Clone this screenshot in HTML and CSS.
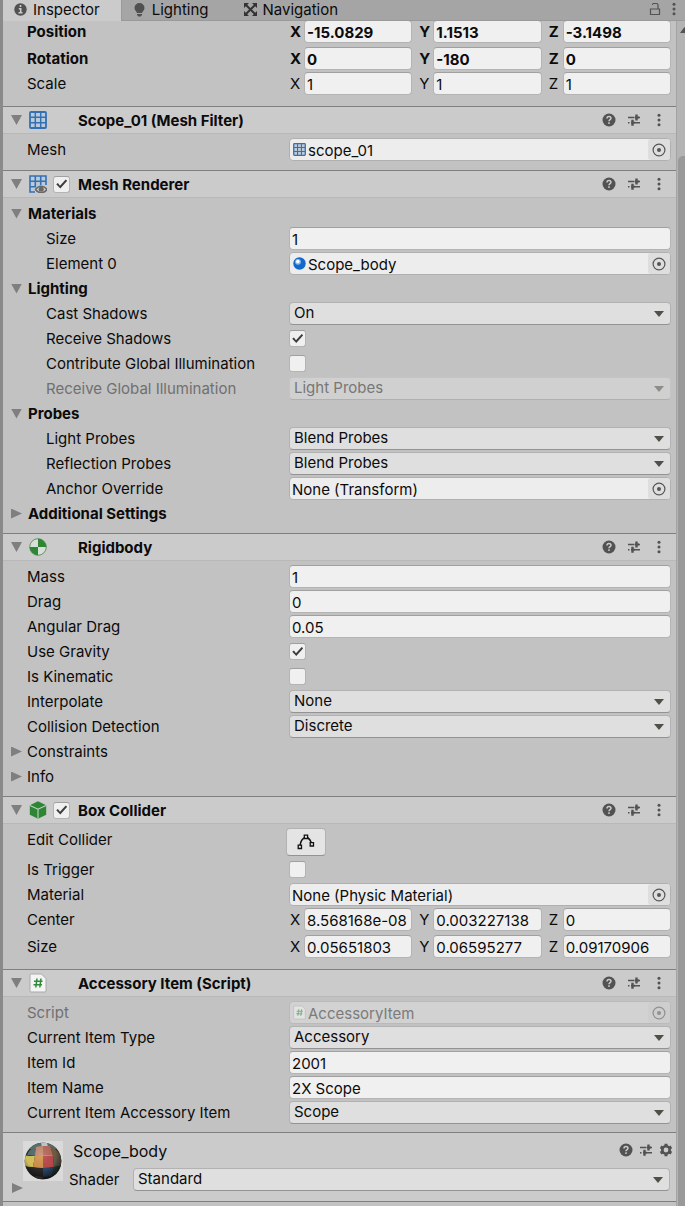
FILE: index.html
```html
<!DOCTYPE html>
<html lang="en">
<head>
    <meta charset="UTF-8">
    <meta name="viewport" content="width=device-width, initial-scale=1.0">
    <title>Inspector</title>
    <link rel="stylesheet" href="styles.css">
</head>
<body>
    <!-- Shared icons -->
    <svg class="sprite" width="0" height="0" aria-hidden="true">
        <symbol id="i-help" viewBox="0 0 14 14">
            <circle cx="7" cy="7" r="6.5" fill="#525252"/>
            <path d="M5 5.6C5 4.2 5.8 3.5 7 3.5s2 .7 2 1.8C9 6.6 7 6.6 7 8.3" fill="none" stroke="#cbcbcb" stroke-width="1.5"/>
            <rect x="6.2" y="9.3" width="1.6" height="1.6" fill="#cbcbcb"/>
        </symbol>
        <symbol id="i-preset" viewBox="0 0 14 14">
            <path d="M1 4.5h6.5M10.5 4.5H13M1 9.7h1.5M6 9.7h7" fill="none" stroke="#525252" stroke-width="1.4"/>
            <path d="M9.5 1.5v6M5.5 6.7v6" fill="none" stroke="#525252" stroke-width="2.4"/>
            <path d="M8 4.5h4M4 9.7h4" fill="none" stroke="#525252" stroke-width="1.8"/>
        </symbol>
        <symbol id="i-menu" viewBox="0 0 14 14">
            <g fill="#525252"><circle cx="7" cy="2.3" r="1.5"/><circle cx="7" cy="7" r="1.5"/><circle cx="7" cy="11.7" r="1.5"/></g>
        </symbol>
        <symbol id="i-gear" viewBox="0 0 14 14">
            <circle cx="7" cy="7" r="3.7" fill="none" stroke="#525252" stroke-width="2.6"/>
            <path d="M7 .8v2M7 11.2v2M1.6 3.9l1.7 1M10.7 9.1l1.7 1M1.6 10.1l1.7-1M10.7 4.9l1.7-1" stroke="#525252" stroke-width="3"/>
        </symbol>
        <symbol id="i-target" viewBox="0 0 14 14">
            <circle cx="7" cy="7" r="5.9" fill="none" stroke="#555" stroke-width="1.2"/>
            <circle cx="7" cy="7" r="2" fill="#555"/>
        </symbol>
        <symbol id="i-mesh" viewBox="0 0 18 18">
            <rect x="1" y="1" width="16" height="16" rx="1" fill="#bccbda" stroke="#3471b3" stroke-width="1.8"/>
            <path d="M6.3 1v16M11.7 1v16M1 6.3h16M1 11.7h16" stroke="#3471b3" stroke-width="1.5"/>
        </symbol>
        <symbol id="i-renderer" viewBox="0 0 18 18">
            <path d="M1 1h16v10H11l-5 6H1z" fill="#bccbda"/>
            <path d="M17 10V1H1v16h5M6.3 1v11M11.7 1v9M1 6.3h16M1 11.7h6" fill="none" stroke="#3471b3" stroke-width="1.6"/>
            <path d="M6.5 14.5c3-4.3 8.5-4.3 11.500 0-3 4.3-8.5 4.3-11.500 0z" fill="#ccc" stroke="#686868" stroke-width="1.4"/>
            <circle cx="12.2" cy="14.2" r="2.5" fill="#686868"/>
        </symbol>
        <symbol id="i-body" viewBox="0 0 18 18">
            <circle cx="9" cy="9" r="8.3" fill="#d6e0d6" stroke="#5f9562" stroke-width="1"/>
            <path d="M9 9V.7A8.3 8.3 0 0 1 17.3 9zM9 9v8.3A8.3 8.3 0 0 1 .7 9z" fill="#2e8536"/>
        </symbol>
        <symbol id="i-box" viewBox="0 0 18 18">
            <path d="M9 .3l8.2 3.9v9.6L9 17.8.8 13.8V4.2z" fill="#2e8536"/>
            <path d="M1 4.500l8 3.7 8-3.7M9 8.2v9.3" fill="none" stroke="#bcd8be" stroke-width="1.1"/>
        </symbol>
        <symbol id="i-script" viewBox="0 0 18 20">
            <path d="M2 1h10.5L17 5.5V18a1 1 0 0 1-1 1H2a1 1 0 0 1-1-1V2a1 1 0 0 1 1-1z" fill="#f4f4f4" stroke="#aaa" stroke-width="1"/>
            <path d="M8 5.5l-1.2 9M12 5.5l-1.2 9M5 8.3h8.5M4.500 11.7H13" fill="none" stroke="#2e8b3a" stroke-width="1.5"/>
        </symbol>
    </svg>

    <nav class="tabs">
        <button class="tab active" type="button">
            <svg width="13" height="13" viewBox="0 0 13 13" aria-hidden="true"><circle cx="6.5" cy="6.5" r="6.2" fill="#525252"/><path d="M6.5 2v2M4.8 5.8h1.9v3.4M4.5 9.7h4" stroke="#cbcbcb" stroke-width="1.6" fill="none"/></svg>
            Inspector
        </button>
        <button class="tab" type="button">
            <svg width="13" height="14" viewBox="0 0 13 14" aria-hidden="true"><path d="M6.5 0a5 5 0 0 1 5 5c0 2.2-2 3.3-2.500 5H4C3.5 8.3 1.5 7.2 1.5 5a5 5 0 0 1 5-5zM4 11h5v1L7.5 13.5h-2L4 12z" fill="#505050"/></svg>
            Lighting
        </button>
        <button class="tab" type="button">
            <svg width="13" height="13" viewBox="0 0 13 13" aria-hidden="true"><path d="M2 2l9 9M11 2l-9 9" stroke="#333" stroke-width="2"/><path d="M0 0h5L0 5zM13 0v5L8 0zM0 13V8l5 5zM13 13H8l5-5z" fill="#333"/></svg>
            Navigation
        </button>
        <span class="tab-tools">
            <button class="icon-btn" type="button" aria-label="Lock"><svg width="12" height="14" viewBox="0 0 12 14"><path d="M1.5 7h9v5.5h-9zM9 7V3Q9 1.5 7.5 1.5h-3Q3.5 1.5 3.5 3" fill="none" stroke="#525252" stroke-width="1.2"/></svg></button>
            <button class="icon-btn" type="button" aria-label="Tab menu"><svg width="14" height="14"><use href="#i-menu"/></svg></button>
        </span>
    </nav>

    <div class="window">
        <main class="inspector">
            <!-- Transform -->
            <section class="component transform">
                <div class="row row-tall strong">
                    <span class="label">Position</span>
                    <div class="vector">
                        <label>X<input type="text" value="-15.0829"></label>
                        <label>Y<input type="text" value="1.1513"></label>
                        <label>Z<input type="text" value="-3.1498"></label>
                    </div>
                </div>
                <div class="row strong">
                    <span class="label">Rotation</span>
                    <div class="vector">
                        <label>X<input type="text" value="0"></label>
                        <label>Y<input type="text" value="-180"></label>
                        <label>Z<input type="text" value="0"></label>
                    </div>
                </div>
                <div class="row">
                    <span class="label">Scale</span>
                    <div class="vector">
                        <label>X<input type="text" value="1"></label>
                        <label>Y<input type="text" value="1"></label>
                        <label>Z<input type="text" value="1"></label>
                    </div>
                </div>
            </section>

            <!-- Mesh Filter -->
            <section class="component">
                <header class="component-header">
                    <button class="fold open" type="button" aria-label="Toggle Mesh Filter"></button>
                    <svg class="type-icon" width="18" height="18"><use href="#i-mesh"/></svg>
                    <span></span>
                    <h2>Scope_01 (Mesh Filter)</h2>
                    <div class="tools">
                        <button class="icon-btn" type="button" aria-label="Help"><svg width="14" height="14"><use href="#i-help"/></svg></button>
                        <button class="icon-btn" type="button" aria-label="Presets"><svg width="14" height="14"><use href="#i-preset"/></svg></button>
                        <button class="icon-btn" type="button" aria-label="Menu"><svg width="14" height="14"><use href="#i-menu"/></svg></button>
                    </div>
                </header>
                <div class="rows rows-single">
                    <div class="row">
                        <label class="label" for="mesh">Mesh</label>
                        <div class="object">
                            <svg width="13" height="13"><use href="#i-mesh"/></svg>
                            <input id="mesh" type="text" value="scope_01" readonly>
                            <button class="picker" type="button" aria-label="Pick mesh"><svg width="14" height="14"><use href="#i-target"/></svg></button>
                        </div>
                    </div>
                </div>
            </section>

            <!-- Mesh Renderer -->
            <section class="component">
                <header class="component-header">
                    <button class="fold open" type="button" aria-label="Toggle Mesh Renderer"></button>
                    <svg class="type-icon" width="18" height="18"><use href="#i-renderer"/></svg>
                    <input type="checkbox" aria-label="Enable Mesh Renderer" checked>
                    <h2>Mesh Renderer</h2>
                    <div class="tools">
                        <button class="icon-btn" type="button" aria-label="Help"><svg width="14" height="14"><use href="#i-help"/></svg></button>
                        <button class="icon-btn" type="button" aria-label="Presets"><svg width="14" height="14"><use href="#i-preset"/></svg></button>
                        <button class="icon-btn" type="button" aria-label="Menu"><svg width="14" height="14"><use href="#i-menu"/></svg></button>
                    </div>
                </header>
                <div class="rows">
                    <button class="fold-row strong open" type="button">Materials</button>
                    <div class="row nested">
                        <label class="label" for="size">Size</label>
                        <input id="size" type="text" value="1">
                    </div>
                    <div class="row nested">
                        <label class="label" for="element0">Element 0</label>
                        <div class="object">
                            <svg width="13" height="13" viewBox="0 0 13 13"><circle cx="6.5" cy="6.5" r="6.2" fill="#1268cb"/><circle cx="5" cy="4.8" r="2.9" fill="#8dbdf0"/><circle cx="4.8" cy="4.5" r="1.7" fill="#fff"/></svg>
                            <input id="element0" type="text" value="Scope_body" readonly>
                            <button class="picker" type="button" aria-label="Pick material"><svg width="14" height="14"><use href="#i-target"/></svg></button>
                        </div>
                    </div>
                    <button class="fold-row strong open" type="button">Lighting</button>
                    <div class="row nested">
                        <label class="label" for="castShadows">Cast Shadows</label>
                        <div class="dropdown"><select id="castShadows"><option>On</option></select></div>
                    </div>
                    <div class="row nested">
                        <label class="label" for="receiveShadows">Receive Shadows</label>
                        <input id="receiveShadows" type="checkbox" checked>
                    </div>
                    <div class="row nested">
                        <label class="label" for="contributeGi">Contribute Global Illumination</label>
                        <input id="contributeGi" type="checkbox">
                    </div>
                    <div class="row nested disabled">
                        <label class="label" for="receiveGi">Receive Global Illumination</label>
                        <div class="dropdown"><select id="receiveGi" disabled><option>Light Probes</option></select></div>
                    </div>
                    <button class="fold-row strong open" type="button">Probes</button>
                    <div class="row nested">
                        <label class="label" for="lightProbes">Light Probes</label>
                        <div class="dropdown"><select id="lightProbes"><option>Blend Probes</option></select></div>
                    </div>
                    <div class="row nested">
                        <label class="label" for="reflectionProbes">Reflection Probes</label>
                        <div class="dropdown"><select id="reflectionProbes"><option>Blend Probes</option></select></div>
                    </div>
                    <div class="row nested">
                        <label class="label" for="anchor">Anchor Override</label>
                        <div class="object">
                            <input id="anchor" type="text" value="None (Transform)" readonly>
                            <button class="picker" type="button" aria-label="Pick anchor"><svg width="14" height="14"><use href="#i-target"/></svg></button>
                        </div>
                    </div>
                    <button class="fold-row strong" type="button">Additional Settings</button>
                </div>
            </section>

            <!-- Rigidbody -->
            <section class="component">
                <header class="component-header">
                    <button class="fold open" type="button" aria-label="Toggle Rigidbody"></button>
                    <svg class="type-icon" width="18" height="18"><use href="#i-body"/></svg>
                    <span></span>
                    <h2>Rigidbody</h2>
                    <div class="tools">
                        <button class="icon-btn" type="button" aria-label="Help"><svg width="14" height="14"><use href="#i-help"/></svg></button>
                        <button class="icon-btn" type="button" aria-label="Presets"><svg width="14" height="14"><use href="#i-preset"/></svg></button>
                        <button class="icon-btn" type="button" aria-label="Menu"><svg width="14" height="14"><use href="#i-menu"/></svg></button>
                    </div>
                </header>
                <div class="rows">
                    <div class="row">
                        <label class="label" for="mass">Mass</label>
                        <input id="mass" type="text" value="1">
                    </div>
                    <div class="row">
                        <label class="label" for="drag">Drag</label>
                        <input id="drag" type="text" value="0">
                    </div>
                    <div class="row">
                        <label class="label" for="angularDrag">Angular Drag</label>
                        <input id="angularDrag" type="text" value="0.05">
                    </div>
                    <div class="row">
                        <label class="label" for="gravity">Use Gravity</label>
                        <input id="gravity" type="checkbox" checked>
                    </div>
                    <div class="row">
                        <label class="label" for="kinematic">Is Kinematic</label>
                        <input id="kinematic" type="checkbox">
                    </div>
                    <div class="row">
                        <label class="label" for="interpolate">Interpolate</label>
                        <div class="dropdown"><select id="interpolate"><option>None</option></select></div>
                    </div>
                    <div class="row">
                        <label class="label" for="collision">Collision Detection</label>
                        <div class="dropdown"><select id="collision"><option>Discrete</option></select></div>
                    </div>
                    <button class="fold-row" type="button">Constraints</button>
                    <button class="fold-row" type="button">Info</button>
                </div>
            </section>

            <!-- Box Collider -->
            <section class="component">
                <header class="component-header">
                    <button class="fold open" type="button" aria-label="Toggle Box Collider"></button>
                    <svg class="type-icon" width="18" height="18"><use href="#i-box"/></svg>
                    <input type="checkbox" aria-label="Enable Box Collider" checked>
                    <h2>Box Collider</h2>
                    <div class="tools">
                        <button class="icon-btn" type="button" aria-label="Help"><svg width="14" height="14"><use href="#i-help"/></svg></button>
                        <button class="icon-btn" type="button" aria-label="Presets"><svg width="14" height="14"><use href="#i-preset"/></svg></button>
                        <button class="icon-btn" type="button" aria-label="Menu"><svg width="14" height="14"><use href="#i-menu"/></svg></button>
                    </div>
                </header>
                <div class="rows rows-loose">
                    <div class="row">
                        <label class="label" for="editCollider">Edit Collider</label>
                        <button id="editCollider" class="edit-btn" type="button">
                            <svg width="18" height="16" viewBox="0 0 18 16"><path d="M3 11.5Q4 5 8 3.5M10.5 3.5Q13 5 14.5 9" fill="none" stroke="#111" stroke-width="1.5"/><path d="M1.2 11.2h3.3v3.3H1.2zM7.3 1.2h3.3v3.3H7.3zM13.2 8.7h3.3V12h-3.3z" fill="#e4e4e4" stroke="#111" stroke-width="1.3"/></svg>
                        </button>
                    </div>
                    <div class="row">
                        <label class="label" for="trigger">Is Trigger</label>
                        <input id="trigger" type="checkbox">
                    </div>
                    <div class="row">
                        <label class="label" for="material">Material</label>
                        <div class="object">
                            <input id="material" type="text" value="None (Physic Material)" readonly>
                            <button class="picker" type="button" aria-label="Pick physic material"><svg width="14" height="14"><use href="#i-target"/></svg></button>
                        </div>
                    </div>
                    <div class="row row-tall">
                        <span class="label">Center</span>
                        <div class="vector">
                            <label>X<input type="text" value="8.568168e-08"></label>
                            <label>Y<input type="text" value="0.003227138"></label>
                            <label>Z<input type="text" value="0"></label>
                        </div>
                    </div>
                    <div class="row">
                        <span class="label">Size</span>
                        <div class="vector">
                            <label>X<input type="text" value="0.05651803"></label>
                            <label>Y<input type="text" value="0.06595277"></label>
                            <label>Z<input type="text" value="0.09170906"></label>
                        </div>
                    </div>
                </div>
            </section>

            <!-- Accessory Item -->
            <section class="component">
                <header class="component-header">
                    <button class="fold open" type="button" aria-label="Toggle Accessory Item"></button>
                    <svg class="type-icon" width="18" height="20"><use href="#i-script"/></svg>
                    <span></span>
                    <h2>Accessory Item (Script)</h2>
                    <div class="tools">
                        <button class="icon-btn" type="button" aria-label="Help"><svg width="14" height="14"><use href="#i-help"/></svg></button>
                        <button class="icon-btn" type="button" aria-label="Presets"><svg width="14" height="14"><use href="#i-preset"/></svg></button>
                        <button class="icon-btn" type="button" aria-label="Menu"><svg width="14" height="14"><use href="#i-menu"/></svg></button>
                    </div>
                </header>
                <div class="rows">
                    <div class="row disabled">
                        <label class="label" for="script">Script</label>
                        <div class="object">
                            <svg width="13" height="15"><use href="#i-script"/></svg>
                            <input id="script" type="text" value="AccessoryItem" disabled>
                            <button class="picker" type="button" aria-label="Pick script" disabled><svg width="14" height="14"><use href="#i-target"/></svg></button>
                        </div>
                    </div>
                    <div class="row">
                        <label class="label" for="itemType">Current Item Type</label>
                        <div class="dropdown"><select id="itemType"><option>Accessory</option></select></div>
                    </div>
                    <div class="row">
                        <label class="label" for="itemId">Item Id</label>
                        <input id="itemId" type="text" value="2001">
                    </div>
                    <div class="row">
                        <label class="label" for="itemName">Item Name</label>
                        <input id="itemName" type="text" value="2X Scope">
                    </div>
                    <div class="row">
                        <label class="label" for="accessory">Current Item Accessory Item</label>
                        <div class="dropdown"><select id="accessory"><option>Scope</option></select></div>
                    </div>
                </div>
            </section>

            <!-- Material -->
            <section class="component material">
                <button class="fold" type="button" aria-label="Toggle material"></button>
                <svg class="preview" width="40" height="40" viewBox="0 0 40 40" aria-hidden="true">
                    <defs>
                        <clipPath id="ball"><circle cx="20" cy="20" r="18.3"/></clipPath>
                        <radialGradient id="shade" cx=".45" cy=".35" r=".62">
                            <stop offset="0" stop-color="#fff" stop-opacity=".12"/>
                            <stop offset=".6" stop-color="#000" stop-opacity=".05"/>
                            <stop offset="1" stop-color="#000" stop-opacity=".65"/>
                        </radialGradient>
                    </defs>
                    <rect width="40" height="40" fill="#dadada"/>
                    <g clip-path="url(#ball)">
                        <rect width="40" height="40" fill="#2b2a29"/>
                        <path d="M0 0h40v8H0z" fill="#587270"/>
                        <path d="M18 1h6l1 6h-6z" fill="#c3ced2"/>
                        <path d="M4 14Q6 8 12 6l2 9z" fill="#54706f"/>
                        <path d="M13 6q7-2 14 0l3 9q-9 2-18 0z" fill="#c78a70"/>
                        <path d="M20 5h7l3 9H20z" fill="#b8695c"/>
                        <path d="M27 5q7 3 11 10l-8 0z" fill="#755d43"/>
                        <path d="M0 14q6 1 12 1l-2 11q-6 0-10-2z" fill="#d8c65c"/>
                        <path d="M12 15h8v12q-5 0-10-1z" fill="#d6934b"/>
                        <path d="M20 15h10l1 11q-5 1-11 1z" fill="#bd4a4c"/>
                        <path d="M30 15l10-1v10l-9 2z" fill="#66604d"/>
                        <path d="M20 27q6 0 11-1l-2 9-9 1z" fill="#2b4a6b"/>
                        <path d="M31 26l9-2-4 10h-7z" fill="#294139"/>
                        <path d="M12 35l8 1v4h-8z" fill="#55514c"/>
                        <rect width="40" height="40" fill="url(#shade)"/>
                    </g>
                </svg>
                <div class="material-info">
                    <div class="material-top">
                        <h2>Scope_body</h2>
                        <div class="tools">
                            <button class="icon-btn" type="button" aria-label="Help"><svg width="14" height="14"><use href="#i-help"/></svg></button>
                            <button class="icon-btn" type="button" aria-label="Presets"><svg width="14" height="14"><use href="#i-preset"/></svg></button>
                            <button class="icon-btn" type="button" aria-label="Settings"><svg width="14" height="14"><use href="#i-gear"/></svg></button>
                        </div>
                    </div>
                    <div class="shader">
                        <label for="shader">Shader</label>
                        <div class="dropdown"><select id="shader"><option>Standard</option></select></div>
                    </div>
                </div>
            </section>
        </main>
        <div class="scrollbar">
            <div class="scroll-up"></div>
            <div class="thumb"></div>
        </div>
    </div>
</body>
</html>
```
FILE: styles.css
```css
* {
    box-sizing: border-box;
}
body {
    margin: 0;
    min-height: 100vh;
    display: flex;
    flex-direction: column;
    border-left: 3px solid #8a8a8a;
    background-color: #c2c2c2;
    color: #0b0b0b;
    font-family: Inter, "Liberation Sans", sans-serif;
    font-size: 15px;
    line-height: 23px;
    overflow: hidden;
}
button, input, select {
    font: inherit;
    color: inherit;
    margin: 0;
}
button {
    padding: 0;
    border: 0;
    background: none;
}
svg {
    display: block;
    flex: none;
}
.sprite {
    position: absolute;
}
h2 {
    margin: 0;
    font-size: 15px;
    font-weight: 700;
}

/* Tabs */
.tabs {
    display: flex;
    height: 21px;
    background-color: #a5a5a5;
    box-shadow: inset 0 -1px #999;
    position: relative;
    z-index: 1;
}
.tab {
    display: flex;
    align-items: center;
    gap: 6px;
    padding: 0 24px 2px 11px;
    line-height: 19px;
}
.tab.active {
    padding-right: 21px;
    background-color: #cbcbcb;
    border-right: 1px solid #999;
}
.tab-tools {
    display: flex;
    align-items: center;
    gap: 6px;
    margin-left: auto;
    padding: 0 4px 4px 0;
}

/* Panel and scrollbar */
.window {
    flex: 1;
    display: flex;
    margin-top: -1px;
}
.inspector {
    flex: 1;
    min-width: 0;
}
.scrollbar {
    width: 9px;
    display: flex;
    flex-direction: column;
    border-left: 1px solid #a3a3a3;
    background-color: #b4b4b4;
    overflow: hidden;
}
.scroll-up {
    width: 12px;
    height: 136px;
    padding: 7px 0 0 3px;
}
.scroll-up::before {
    content: "";
    display: block;
    height: 6px;
    background-color: #525252;
    clip-path: polygon(50% 0, 100% 100%, 0 100%);
}
.thumb {
    flex: 1;
    margin-left: 1px;
    border-radius: 5px 0 0 0;
    background-color: #999;
}

/* Components */
.component-header {
    display: grid;
    grid-template-columns: 18px 24px 25px 1fr auto;
    align-items: center;
    height: 28px;
    padding: 0 10px 0 8px;
    background-color: #cbcbcb;
    border-top: 1px solid #7f7f7f;
    border-bottom: 1px solid #b8b8b8;
}
.tools {
    display: flex;
    gap: 11px;
}
.icon-btn {
    display: flex;
}
.fold, .fold-row::before {
    width: 11px;
    height: 10px;
    background-color: #7f7f7f;
    clip-path: polygon(0 0, 100% 50%, 0 100%);
}
.fold.open, .fold-row.open::before {
    clip-path: polygon(0 0, 100% 0, 50% 100%);
}
.rows, .transform {
    display: flex;
    flex-direction: column;
    gap: 2px;
    padding: 4px 5px 8px 8px;
}
.rows-single {
    padding-bottom: 9px;
}
.rows-loose {
    padding-bottom: 11px;
}
.transform {
    padding-top: 0;
    padding-bottom: 11px;
}
.row {
    display: grid;
    grid-template-columns: 262px 1fr;
    padding-left: 16px;
    min-height: 23px;
}
.row-tall {
    margin-bottom: 2px;
}
.label {
    white-space: nowrap;
}
.nested .label {
    padding-left: 19px;
}
.strong {
    font-weight: 700;
}
.disabled .label {
    color: #707070;
}
.fold-row {
    display: flex;
    align-items: center;
    gap: 5px;
    height: 23px;
    text-align: left;
}
.fold-row.strong {
    gap: 6px;
}
.fold-row::before {
    content: "";
}

/* Fields */
input[type="text"] {
    width: 100%;
    min-width: 0;
    height: 23px;
    padding: 2px 2px 0;
    border: 1px solid #b4b4b4;
    border-top-color: #a0a0a0;
    border-radius: 4px;
    background-color: #f0f0f0;
}
input[type="checkbox"] {
    appearance: none;
    width: 17px;
    height: 17px;
    align-self: center;
    border: 1px solid #b4b4b4;
    border-top-color: #a0a0a0;
    border-radius: 3px;
    background-color: #f0f0f0;
}
input[type="checkbox"]:checked::after {
    content: "";
    display: block;
    height: 15px;
    background-color: #3c3c3c;
    clip-path: polygon(15% 52%, 26% 44%, 40% 62%, 78% 20%, 88% 28%, 42% 80%);
}
.vector {
    display: grid;
    grid-template-columns: repeat(3, 1fr);
    gap: 6px;
}
.vector label {
    display: grid;
    grid-template-columns: 14px 1fr;
    padding-left: 1px;
}
.object {
    display: flex;
    align-items: center;
    height: 23px;
    padding-left: 2px;
    border: 1px solid #b0b0b0;
    border-radius: 4px;
    background-color: #ededed;
}
.object > svg {
    margin-left: 1px;
}
.object input[type="text"] {
    height: 21px;
    padding: 2px 0 0;
    border: 0;
    background: none;
}
.object svg + input[type="text"] {
    padding-left: 2px;
}
.picker {
    flex: none;
    display: grid;
    place-items: center;
    width: 22px;
    height: 21px;
    border-radius: 3px;
    background-color: #dedede;
}
.disabled .object {
    background-color: #d2d2d2;
    border-color: #bababa;
    color: #7b7b7b;
}
.disabled .object svg {
    opacity: 0.5;
}
.disabled .picker {
    background-color: #cecece;
}
.dropdown {
    position: relative;
    flex: 1;
}
.dropdown::after {
    content: "";
    position: absolute;
    right: 7px;
    top: 9px;
    width: 10px;
    height: 6px;
    background-color: #50504a;
    clip-path: polygon(0 0, 100% 0, 50% 100%);
    pointer-events: none;
}
select {
    appearance: none;
    display: block;
    width: 100%;
    height: 23px;
    padding: 0 20px 1px 4px;
    line-height: 20px;
    border: 1px solid #b2b2b2;
    border-bottom-color: #939393;
    border-radius: 4px;
    background-color: #dfdfdf;
}
select:disabled {
    color: #777;
    opacity: 1;
    background-color: #d0d0d0;
    border-color: #c4c4c4;
    border-bottom-color: #b0b0b0;
}
.disabled .dropdown::after {
    background-color: #8d8d8a;
}
.edit-btn {
    display: grid;
    place-items: center;
    width: 40px;
    height: 28px;
    margin-left: -3px;
    border: 1px solid #b2b2b2;
    border-bottom-color: #939393;
    border-radius: 4px;
    background-color: #e4e4e4;
}

/* Material footer */
.material {
    display: flex;
    height: 70px;
    padding: 8px 6px 0 9px;
    background-color: #cbcbcb;
    border-top: 1px solid #7f7f7f;
    border-bottom: 1px solid #7f7f7f;
}
.material .fold {
    align-self: flex-end;
    margin-bottom: 8px;
}
.material-info {
    flex: 1;
    padding-left: 6px;
}
.material-top {
    display: flex;
    justify-content: space-between;
    height: 27px;
    padding-left: 4px;
}
.material-top h2 {
    font-size: 16px;
    font-weight: 400;
    line-height: 20px;
}
.material .tools {
    gap: 6px;
    margin: 2px -3px 0 0;
    align-self: flex-start;
}
.shader {
    display: flex;
}
.shader label {
    width: 64px;
}
```
